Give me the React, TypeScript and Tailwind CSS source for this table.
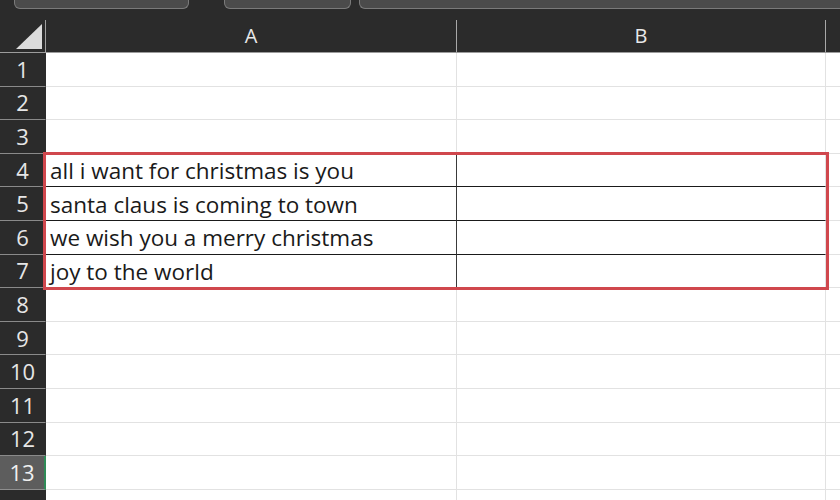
const rows = [
  '',
  '',
  '',
  'all i want for christmas is you',
  'santa claus is coming to town',
  'we wish you a merry christmas',
  'joy to the world',
  '',
  '',
  '',
  '',
  '',
  '',
  '',
];

export default function App() {
  return (
    <div className="w-[840px] h-[500px] overflow-hidden bg-[#2b2b2b] flex flex-col relative" style={{ fontFamily: '"Open Sans", Lato, sans-serif' }}>
      {/* toolbar remnants */}
      <div className="h-[20px] flex items-start shrink-0">
        <div className="ml-[14px] w-[175px] h-[9px] bg-[#4b4b4b] border-b border-x border-[#7a7a7a] rounded-b-[6px]" />
        <div className="ml-[35px] w-[127px] h-[9px] bg-[#4b4b4b] border-b border-x border-[#7a7a7a] rounded-b-[6px]" />
        <div className="ml-[8px] flex-1 h-[9px] bg-[#4b4b4b] border-b border-l border-[#7a7a7a] rounded-bl-[6px]" />
      </div>

      {/* column header */}
      <div className="h-[33px] flex shrink-0 border-b border-[#9c9c9c]">
        <div className="w-[46px] relative border-r border-[#a0a0a0] flex items-end justify-end pb-[3px] pr-[3px]">
          <svg width="26" height="25" viewBox="0 0 26 25">
            <polygon points="26,0 26,25 0,25" fill="#dcdcdc" />
          </svg>
        </div>
        <div className="w-[411px] border-r border-[#a8a8a8] flex items-center justify-center text-[20px] text-[#e8e8e8]">A</div>
        <div className="w-[369px] border-r border-[#a8a8a8] flex items-center justify-center text-[20px] text-[#e8e8e8]">B</div>
        <div className="flex-1" />
      </div>

      {/* rows */}
      <div className="flex-1 relative">
        {rows.map((text, i) => {
          const inBox = i >= 3 && i <= 6;
          const selected = i === 12;
          return (
            <div key={i} className="h-[33.6px] flex">
              <div
                className={
                  'w-[46px] flex items-center justify-center text-[22px] border-b ' +
                  (selected
                    ? 'bg-[#5d5d5d] text-[#f0f0f0] border-[#8e8e8e] border-r-2 border-r-[#2e8b57]'
                    : 'bg-[#2b2b2b] text-[#e6e6e6] border-[#8a8a8a] border-r border-r-[#2b2b2b]')
                }
              >
                {i < 13 ? i + 1 : ''}
              </div>
              <div
                className={
                  'w-[411px] bg-white flex items-center pl-[4px] pt-[2px] text-[22.5px] text-[#1a1a1a] ' +
                  (inBox ? 'border-b border-r border-[#1a1a1a] border-r-[#3a3a3a]' : 'border-b border-r border-[#e2e2e2]')
                }
              >
                {text}
              </div>
              <div className={'w-[369px] bg-white border-b border-r ' + (inBox ? 'border-b-[#1a1a1a] border-r-[#e2e2e2]' : 'border-[#e2e2e2]')} />
              <div className="flex-1 bg-white border-b border-[#e2e2e2]" />
            </div>
          );
        })}
        {/* selection outline */}
        <div className="absolute left-[43px] top-[99px] w-[786px] h-[138px] border-[3px] border-[#d0474d] pointer-events-none" />
      </div>
    </div>
  );
}
